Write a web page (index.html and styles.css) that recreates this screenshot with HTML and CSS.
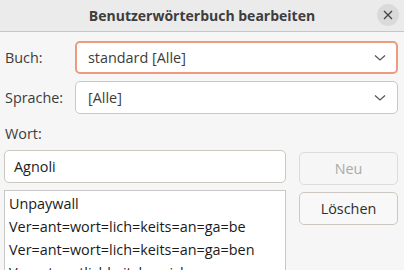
FILE: index.html
```html
<!DOCTYPE html>
<html>
<head>
<meta charset="utf-8">
<link rel="stylesheet" href="styles.css">
</head>
<body>
<div class="dialog">
  <div class="header">
    <div class="title">Benutzerwörterbuch bearbeiten</div>
    <div class="close"><svg width="10" height="10" viewBox="0 0 10 10"><path d="M1 1L9 9M9 1L1 9" stroke="#444" stroke-width="1.3"/></svg></div>
  </div>
  <div class="content">
    <div class="row">
      <div class="label">Buch:</div>
      <div class="combo focus"><span>standard [Alle]</span><svg class="chev" width="12" height="8" viewBox="0 0 12 8"><path d="M1 1.5L6 6L11 1.5" fill="none" stroke="#555" stroke-width="1.2"/></svg></div>
    </div>
    <div class="row">
      <div class="label">Sprache:</div>
      <div class="combo"><span>[Alle]</span><svg class="chev" width="12" height="8" viewBox="0 0 12 8"><path d="M1 1.5L6 6L11 1.5" fill="none" stroke="#555" stroke-width="1.2"/></svg></div>
    </div>
    <div class="wortlabel">Wort:</div>
    <div class="lower">
      <div class="left">
        <div class="entry">Agnoli</div>
        <div class="list">
          <div class="item">Unpaywall</div>
          <div class="item">Ver=ant=wort=lich=keits=an=ga=be</div>
          <div class="item">Ver=ant=wort=lich=keits=an=ga=ben</div>
          <div class="item">Verantwortlichkeitsbereich</div>
        </div>
      </div>
      <div class="buttons">
        <div class="btn disabled">Neu</div>
        <div class="btn">Löschen</div>
      </div>
    </div>
  </div>
</div>
</body>
</html>
```
FILE: styles.css
```css
html, body { margin: 0; padding: 0; }
body {
  width: 404px; height: 270px; overflow: hidden;
  background: #f6f6f6;
  font-family: "Open Sans", "DejaVu Sans", sans-serif;
  font-size: 14.4px;
  color: #3c3c3c;
}
.dialog { display: flex; flex-direction: column; }
.header {
  height: 32px; box-sizing: border-box;
  background: #ebebeb; border-bottom: 1px solid #c6c6c6;
  display: flex; align-items: center; justify-content: center;
  position: relative;
}
.title { font-weight: bold; font-size: 14px; color: #3d3d3d; }
.close {
  position: absolute; right: 5px; top: 4px;
  width: 22px; height: 22px; border-radius: 50%;
  background: #dadada;
  display: flex; align-items: center; justify-content: center;
}
.content { padding: 9px 6px 0 4px; display: flex; flex-direction: column; }
.row { display: flex; align-items: center; margin-bottom: 7px; }
.label { width: 70px; padding-left: 1px; }
.combo {
  flex: 1; height: 33px; box-sizing: border-box;
  background: #fff; border: 1px solid #cdc7c2; border-radius: 5px;
  display: flex; align-items: center; justify-content: space-between;
  padding: 0 11px 0 12px;
}
.combo.focus { border: 2px solid #ee9a80; padding: 0 10px 0 11px; }
.wortlabel { padding-left: 1px; margin-top: 3px; height: 26px; }
.lower { display: flex; gap: 13px; }
.left { width: 282px; display: flex; flex-direction: column; gap: 7px; }
.entry {
  height: 33px; box-sizing: border-box; background: #fff;
  border: 1px solid #cdc7c2; border-radius: 5px;
  display: flex; align-items: center; padding-left: 9px;
  color: #222;
}
.list {
  background: #fff; border: 1px solid #c8c8c8; height: 100px;
  padding: 1px 4px; color: #1a1a1a;
}
.item { height: 23px; line-height: 23px; white-space: nowrap; }
.buttons { width: 99px; display: flex; flex-direction: column; gap: 7px; padding-top: 2px; }
.btn {
  height: 33px; box-sizing: border-box; border: 1px solid #cdc7c2; border-radius: 5px;
  background: #f8f8f8; display: flex; align-items: center; justify-content: center;
  color: #2e2e2e;
}
.btn.disabled { color: #aaa; background: #f6f6f6; border-color: #dcdcdc; }
```
